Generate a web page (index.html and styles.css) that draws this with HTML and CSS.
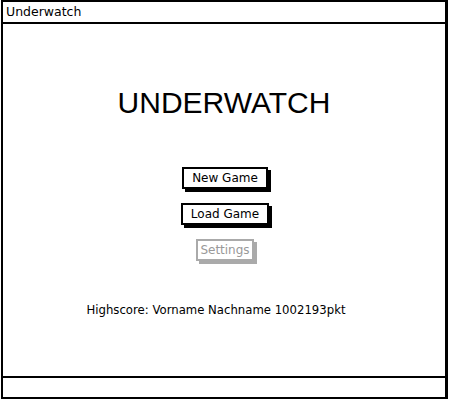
FILE: index.html
```html
<!DOCTYPE html>
<html>
<head>
<meta charset="utf-8">
<link rel="stylesheet" href="styles.css">
</head>
<body>
<div class="window">
  <div class="titlebar">Underwatch</div>
  <div class="content">
    <h1 class="title">UNDERWATCH</h1>
    <div class="menu">
      <div class="btn btn-new">New Game</div>
      <div class="btn btn-load">Load Game</div>
      <div class="btn btn-disabled">Settings</div>
    </div>
    <div class="highscore">Highscore: Vorname Nachname 1002193pkt</div>
  </div>
  <div class="statusbar"></div>
</div>
</body>
</html>
```
FILE: styles.css
```css
html, body {
  margin: 0;
  padding: 0;
  background: #fff;
}
body {
  font-family: "DejaVu Sans", "Liberation Sans", sans-serif;
  color: #000;
}
.window {
  box-sizing: border-box;
  margin: 0 2px 0 1px;
  width: 447px;
  height: 399px;
  border: 2px solid #000;
  border-right-width: 3px;
  display: flex;
  flex-direction: column;
}
.titlebar {
  height: 20px;
  border-bottom: 2px solid #000;
  font-size: 12.5px;
  line-height: 20px;
  padding-left: 3px;
}
.content {
  flex: 1;
  display: flex;
  flex-direction: column;
  align-items: center;
}
.title {
  margin: 62px 0 0 0;
  font-family: "Liberation Sans", Arial, sans-serif;
  font-weight: normal;
  font-size: 30px;
  line-height: 34px;
}
.menu {
  margin-top: 47px;
  display: flex;
  flex-direction: column;
  align-items: center;
  gap: 14px;
  margin-left: 2px;
}
.btn {
  box-sizing: border-box;
  height: 22px;
  border: 2px solid #000;
  box-shadow: 3px 3px 0 #000;
  font-size: 12px;
  line-height: 18px;
  padding: 0 8px;
  background: #fff;
}
.btn-disabled {
  color: #999;
  border-color: #aaa;
  box-shadow: 3px 3px 0 #aaa;
  padding: 0 2px;
}
.highscore {
  margin-top: 42px;
  font-size: 11.7px;
  margin-right: 16px;
}
.statusbar {
  height: 19px;
  border-top: 2px solid #000;
}
```
